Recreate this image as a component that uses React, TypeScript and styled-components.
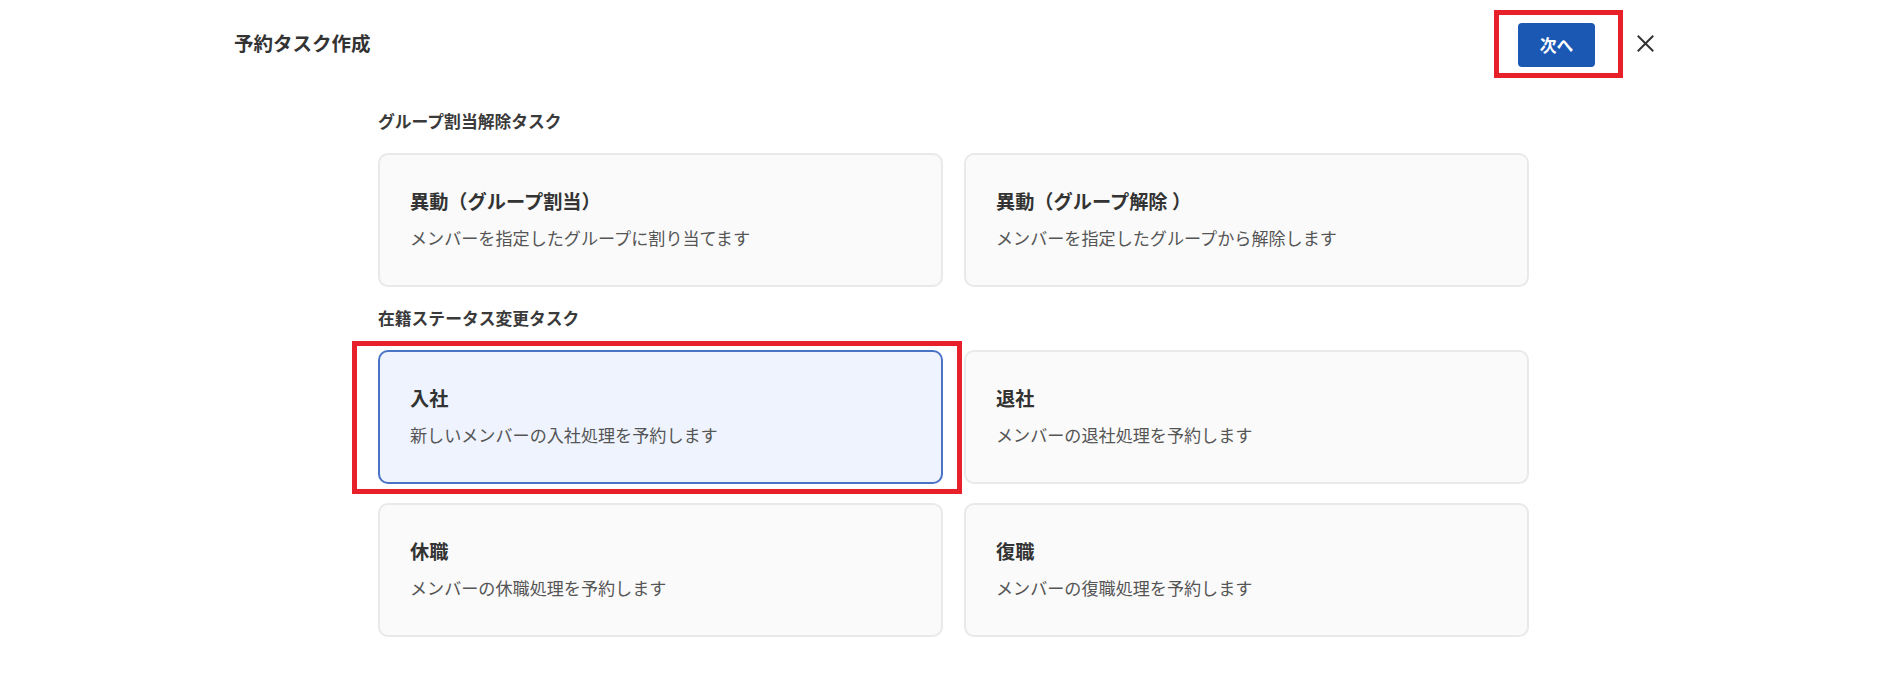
import React from "react";
import styled, { createGlobalStyle } from "styled-components";

const GlobalStyle = createGlobalStyle`
  html, body {
    margin: 0;
    padding: 0;
    background: #ffffff;
    font-family: "Noto Sans CJK JP", "Noto Sans", sans-serif;
    color: #333333;
  }
  * { box-sizing: border-box; }
`;

const Page = styled.div`
  width: 100%;
  min-height: 685px;
  background: #ffffff;
`;

const Header = styled.header`
  display: flex;
  align-items: center;
  justify-content: space-between;
  padding: 23px 247px 0 234px;
`;

const Title = styled.h1`
  margin: 0 0 4px 0;
  font-size: 19.5px;
  line-height: 28px;
  font-weight: 700;
  color: #333333;
`;

const Actions = styled.div`
  display: flex;
  align-items: center;
`;

const Annotated = styled.div`
  position: relative;
  display: flex;
`;

const RedMark = styled.span<{ $t: number; $r: number; $b: number; $l: number }>`
  position: absolute;
  top: ${(p) => p.$t}px;
  right: ${(p) => p.$r}px;
  bottom: ${(p) => p.$b}px;
  left: ${(p) => p.$l}px;
  border: 5px solid #e8202a;
  pointer-events: none;
`;

const PrimaryButton = styled.button`
  height: 44px;
  width: 77px;
  padding: 0;
  border: none;
  border-radius: 4px;
  background: #1a58b3;
  color: #ffffff;
  font-family: inherit;
  font-size: 16.8px;
  font-weight: 700;
  line-height: 24px;
  cursor: pointer;
`;

const CloseButton = styled.button`
  width: 24px;
  height: 24px;
  margin-left: 38px;
  margin-bottom: 4px;
  padding: 0;
  border: none;
  background: transparent;
  display: flex;
  align-items: center;
  justify-content: center;
  cursor: pointer;
`;

const Main = styled.main`
  width: 1151px;
  margin-left: calc(50% - 574px);
  padding-top: 42px;
  display: flex;
  flex-direction: column;
`;

const Section = styled.section`
  display: flex;
  flex-direction: column;
  gap: 20px;
  & + & {
    margin-top: 19px;
  }
`;

const SectionLabel = styled.h2`
  margin: 0;
  font-size: 16.8px;
  line-height: 24px;
  font-weight: 700;
  color: #3a3a3a;
`;

const Grid = styled.div`
  display: grid;
  grid-template-columns: 565px 565px;
  column-gap: 21px;
  row-gap: 19px;
`;

const Card = styled.div<{ $selected?: boolean }>`
  position: relative;
  height: 134px;
  padding: 32px 30px;
  border: 2px solid ${(p) => (p.$selected ? "#4a73c6" : "#e9e9e9")};
  border-radius: 10px;
  background: ${(p) => (p.$selected ? "#eef3fd" : "#fafafa")};
  display: flex;
  flex-direction: column;
  gap: 9px;
  cursor: pointer;
`;

const CardTitle = styled.div`
  font-size: 19.2px;
  line-height: 29px;
  font-weight: 700;
  color: #333333;
`;

const CardDesc = styled.div`
  font-size: 17.1px;
  line-height: 25px;
  font-weight: 400;
  color: #555555;
`;

type Task = { title: string; desc: string; selected?: boolean };

const groupTasks: Task[] = [
  { title: "異動（グループ割当）", desc: "メンバーを指定したグループに割り当てます" },
  { title: "異動（グループ解除 ）", desc: "メンバーを指定したグループから解除します" },
];

const statusTasks: Task[] = [
  { title: "入社", desc: "新しいメンバーの入社処理を予約します", selected: true },
  { title: "退社", desc: "メンバーの退社処理を予約します" },
  { title: "休職", desc: "メンバーの休職処理を予約します" },
  { title: "復職", desc: "メンバーの復職処理を予約します" },
];

const TaskCard: React.FC<{ task: Task }> = ({ task }) => (
  <Card $selected={task.selected}>
    <CardTitle>{task.title}</CardTitle>
    <CardDesc>{task.desc}</CardDesc>
    {task.selected && <RedMark $t={-11} $r={-21} $b={-12} $l={-28} />}
  </Card>
);

const CloseIcon = () => (
  <svg width="17" height="17" viewBox="0 0 17 17" fill="none">
    <path d="M1.5 1.5 L15.5 15.5 M15.5 1.5 L1.5 15.5" stroke="#333333" strokeWidth="2" strokeLinecap="square" />
  </svg>
);

export default function App() {
  return (
    <Page>
      <GlobalStyle />
      <Header>
        <Title>予約タスク作成</Title>
        <Actions>
          <Annotated>
            <PrimaryButton>次へ</PrimaryButton>
            <RedMark $t={-13} $r={-28} $b={-11} $l={-24} />
          </Annotated>
          <CloseButton aria-label="閉じる">
            <CloseIcon />
          </CloseButton>
        </Actions>
      </Header>
      <Main>
        <Section>
          <SectionLabel>グループ割当解除タスク</SectionLabel>
          <Grid>
            {groupTasks.map((t) => (
              <TaskCard key={t.title} task={t} />
            ))}
          </Grid>
        </Section>
        <Section>
          <SectionLabel>在籍ステータス変更タスク</SectionLabel>
          <Grid>
            {statusTasks.map((t) => (
              <TaskCard key={t.title} task={t} />
            ))}
          </Grid>
        </Section>
      </Main>
    </Page>
  );
}
